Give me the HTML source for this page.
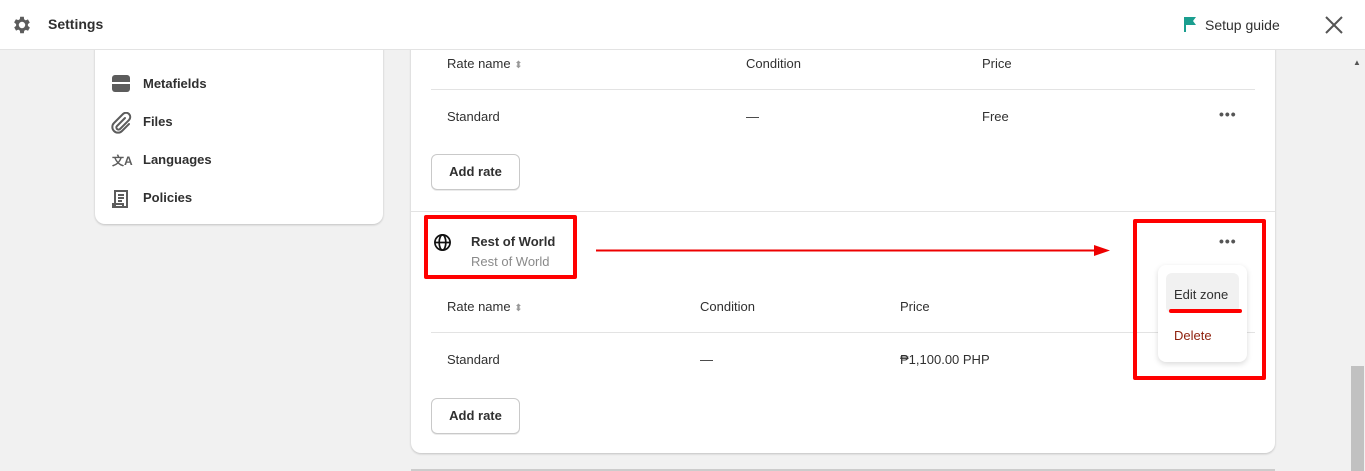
<!DOCTYPE html>
<html><head><style>
*{margin:0;padding:0;box-sizing:border-box}
body{width:1365px;height:471px;overflow:hidden;background:#f1f1f1;font-family:"Liberation Sans",sans-serif;font-size:13px;color:#303030;position:relative}
.a{position:absolute;white-space:nowrap}
.top{position:absolute;left:0;top:0;width:1365px;height:50px;background:#fff;border-bottom:1px solid #e3e3e3;z-index:5}
.top .a{z-index:6}
.side{position:absolute;left:95px;top:30px;width:288px;height:194px;background:#fff;border-radius:10px;box-shadow:0 1px 2px rgba(0,0,0,.2)}
.card{position:absolute;left:411px;top:20px;width:864px;height:433px;background:#fff;border-radius:10px;box-shadow:0 1px 2px rgba(0,0,0,.2)}
.hl{position:absolute;height:1px;background:#e3e3e3}
.btn{position:absolute;width:89px;height:36px;border:1px solid #c9c9c9;border-radius:6px;background:#fff;font-weight:bold;text-align:center;line-height:34px;box-shadow:0 1px 0 rgba(0,0,0,.08)}
.dots{position:absolute;font-weight:bold;letter-spacing:1px;color:#555;font-size:14px}
.rb{position:absolute;border:4px solid #f00;border-radius:2px}
</style></head><body>
<div class="top">
<svg class="a" style="left:11px;top:14px" width="22" height="22" viewBox="0 0 24 24"><path fill="#5c5c5c" d="M19.4 13a7.5 7.5 0 000-2l2.1-1.6-2-3.5-2.5 1a7.6 7.6 0 00-1.7-1L15 3h-4l-.4 2.7c-.6.3-1.2.6-1.7 1l-2.5-1-2 3.5L6.6 11a7.5 7.5 0 000 2l-2.1 1.6 2 3.5 2.5-1c.5.4 1.1.7 1.7 1L11 21h4l.4-2.7c.6-.3 1.2-.6 1.7-1l2.5 1 2-3.5zM13 15.5a3.5 3.5 0 110-7 3.5 3.5 0 010 7z" transform="translate(-1 0)"/></svg>
<div class="a" style="left:48px;top:16px;font-size:14px;font-weight:bold;color:#303030">Settings</div>
<svg class="a" style="left:1183px;top:16px" width="14" height="16" viewBox="0 0 14 16"><path d="M1 1h12l-3 4 3 4H3v7H1z" fill="#1a9e8f"/></svg>
<div class="a" style="left:1205px;top:17px;font-size:14px">Setup guide</div>
<svg class="a" style="left:1324px;top:15px" width="20" height="20"><path d="M2 2L18 18M18 2L2 18" stroke="#555" stroke-width="2"/></svg>
</div>

<div class="side"></div>
<div class="a" style="left:113px;top:40px;width:18px;height:12px;overflow:hidden"><div style="margin-top:-4px;width:16px;height:10px;border:2px solid #5c5c5c;border-radius:2px"></div></div>
<div class="a" style="left:112px;top:75px;width:18px;height:17px;background:#5c5c5c;border-radius:3px"></div>
<div class="a" style="left:112px;top:82px;width:18px;height:2px;background:#fff"></div>
<div class="a" style="left:143px;top:76px;font-weight:bold">Metafields</div>
<svg class="a" style="left:110px;top:112px" width="22" height="22" viewBox="0 0 22 22"><path d="M15 6l-8 8a2 2 0 003 3l9-9a4 4 0 00-6-6l-9 9a5.5 5.5 0 008 8l7-7" fill="none" stroke="#5c5c5c" stroke-width="2" stroke-linecap="round"/></svg>
<div class="a" style="left:143px;top:114px;font-weight:bold">Files</div>
<div class="a" style="left:112px;top:152px;font-size:12px;font-weight:bold;color:#5c5c5c">文A</div>
<div class="a" style="left:143px;top:152px;font-weight:bold">Languages</div>
<svg class="a" style="left:110px;top:188px" width="22" height="22" viewBox="0 0 22 22"><path d="M5 19V3h12v16H3v-3h10v3M8 7h6M8 10h6M8 13h4" fill="none" stroke="#5c5c5c" stroke-width="2"/></svg>
<div class="a" style="left:143px;top:190px;font-weight:bold">Policies</div>

<div class="card"></div>
<div class="a" style="left:447px;top:56px">Rate name <span style="color:#999;font-size:10px">⬍</span></div>
<div class="a" style="left:746px;top:56px">Condition</div>
<div class="a" style="left:982px;top:56px">Price</div>
<div class="hl" style="left:431px;top:89px;width:824px"></div>
<div class="a" style="left:447px;top:109px">Standard</div>
<div class="a" style="left:746px;top:109px">—</div>
<div class="a" style="left:982px;top:109px">Free</div>
<div class="dots" style="left:1219px;top:106px">•••</div>
<div class="btn" style="left:431px;top:154px">Add rate</div>
<div class="hl" style="left:411px;top:211px;width:864px"></div>

<svg class="a" style="left:433px;top:233px" width="19" height="19" viewBox="0 0 20 20"><g fill="none" stroke="#111" stroke-width="1.8"><circle cx="10" cy="10" r="8"/><ellipse cx="10" cy="10" rx="3.5" ry="8"/><path d="M2 10h16"/></g></svg>
<div class="a" style="left:471px;top:234px;font-weight:bold">Rest of World</div>
<div class="a" style="left:471px;top:254px;color:#8a8a8a">Rest of World</div>
<div class="dots" style="left:1219px;top:233px">•••</div>
<div class="a" style="left:447px;top:299px">Rate name <span style="color:#999;font-size:10px">⬍</span></div>
<div class="a" style="left:700px;top:299px">Condition</div>
<div class="a" style="left:900px;top:299px">Price</div>
<div class="hl" style="left:431px;top:332px;width:824px"></div>
<div class="a" style="left:447px;top:352px">Standard</div>
<div class="a" style="left:700px;top:352px">—</div>
<div class="a" style="left:900px;top:352px">₱1,100.00 PHP</div>
<div class="btn" style="left:431px;top:398px">Add rate</div>
<div class="hl" style="left:411px;top:469px;width:864px;height:2px;background:#ccc"></div>

<div class="a" style="left:1158px;top:265px;width:89px;height:97px;background:#fff;border-radius:8px;box-shadow:0 2px 6px rgba(0,0,0,.15)"></div>
<div class="a" style="left:1166px;top:273px;width:73px;height:40px;background:#f1f1f1;border-radius:6px"></div>
<div class="a" style="left:1174px;top:287px">Edit zone</div>
<div class="a" style="left:1174px;top:328px;color:#8e1f0b">Delete</div>

<div class="rb" style="left:424px;top:215px;width:153px;height:64px"></div>
<div class="rb" style="left:1133px;top:219px;width:133px;height:161px"></div>
<div class="a" style="left:1169px;top:309px;width:73px;height:4px;background:#f00;border-radius:2px"></div>
<svg class="a" style="left:594px;top:243px" width="520" height="16"><path d="M2 7.5H505" stroke="#e00" stroke-width="2"/><path d="M500 2L516 7.5 500 13z" fill="#e00"/></svg>

<div class="a" style="left:1350px;top:51px;width:15px;height:420px;background:#f1f1f1"></div>
<div class="a" style="left:1353px;top:58px;font-size:8px;color:#555">▲</div>
<div class="a" style="left:1351px;top:366px;width:13px;height:105px;background:#c1c1c1"></div>
</body></html>
